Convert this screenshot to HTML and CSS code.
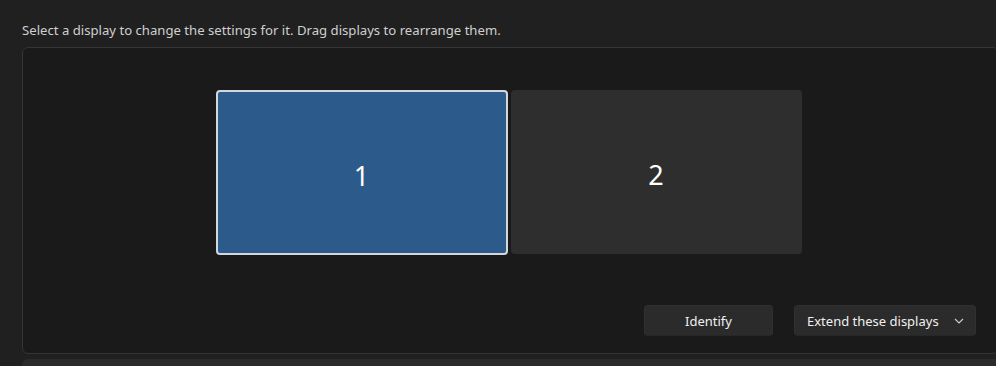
FILE: index.html
```html
<!DOCTYPE html>
<html lang="en">
<head>
    <meta charset="UTF-8">
    <title>Display</title>
    <link rel="stylesheet" href="styles.css">
</head>
<body>
    <p class="hint">Select a display to change the settings for it. Drag displays to rearrange them.</p>

    <div class="arrange">
        <div class="monitors">
            <div class="monitor selected">1</div>
            <div class="monitor">2</div>
        </div>
        <div class="actions">
            <button class="btn identify">Identify</button>
            <button class="btn dropdown">
                Extend these displays
                <svg class="chevron" width="10" height="6" viewBox="0 0 10 6">
                    <path d="M1 1 L5 5 L9 1" fill="none" stroke="#cfcfcf" stroke-width="1.1"/>
                </svg>
            </button>
        </div>
    </div>

    <div class="next-card"></div>
</body>
</html>
```

FILE: styles.css
```css
body {
    font-family: 'Noto Sans', 'Open Sans', sans-serif;
    margin: 0;
    background-color: #202020;
    color: #d6d6d6;
    overflow: hidden;
}
.hint {
    margin: 0;
    padding: 21px 0 0 22px;
    height: 26px;
    font-size: 13.15px;
    line-height: 18px;
    color: #cfcfcf;
}
.arrange {
    margin-left: 22px;
    width: 975px;
    height: 305px;
    background: #1a1a1a;
    border: 1px solid #353535;
    border-radius: 6px;
    display: flex;
    flex-direction: column;
}
.monitors {
    display: flex;
    justify-content: center;
    gap: 3px;
    padding-top: 42px;
    padding-right: 4px;
}
.monitor {
    width: 291px;
    height: 164px;
    box-sizing: border-box;
    border-radius: 4px;
    background: #2e2e2e;
    color: #fff;
    font-size: 27px;
    padding-top: 5px;
    display: flex;
    align-items: center;
    justify-content: center;
}
.monitor.selected {
    width: 292px;
    height: 165px;
    background: #2c5a8a;
    border: 2px solid #d3d7dc;
}
.actions {
    display: flex;
    justify-content: flex-end;
    gap: 21px;
    margin-top: 50px;
    padding-right: 22px;
}
.btn {
    height: 31px;
    box-sizing: border-box;
    background: #2b2b2b;
    border: 1px solid #303030;
    border-bottom-color: #272727;
    border-radius: 4px;
    color: #f0f0f0;
    font-family: inherit;
    font-size: 13px;
    padding: 0;
    display: flex;
    align-items: center;
    justify-content: center;
}
.identify {
    width: 129px;
}
.dropdown {
    width: 182px;
    justify-content: flex-start;
    padding-left: 12px;
}
.chevron {
    margin-left: 15px;
}
.next-card {
    margin: 5px 0 0 22px;
    height: 20px;
    background: #2b2b2b;
    border-radius: 6px 0 0 0;
}
```
